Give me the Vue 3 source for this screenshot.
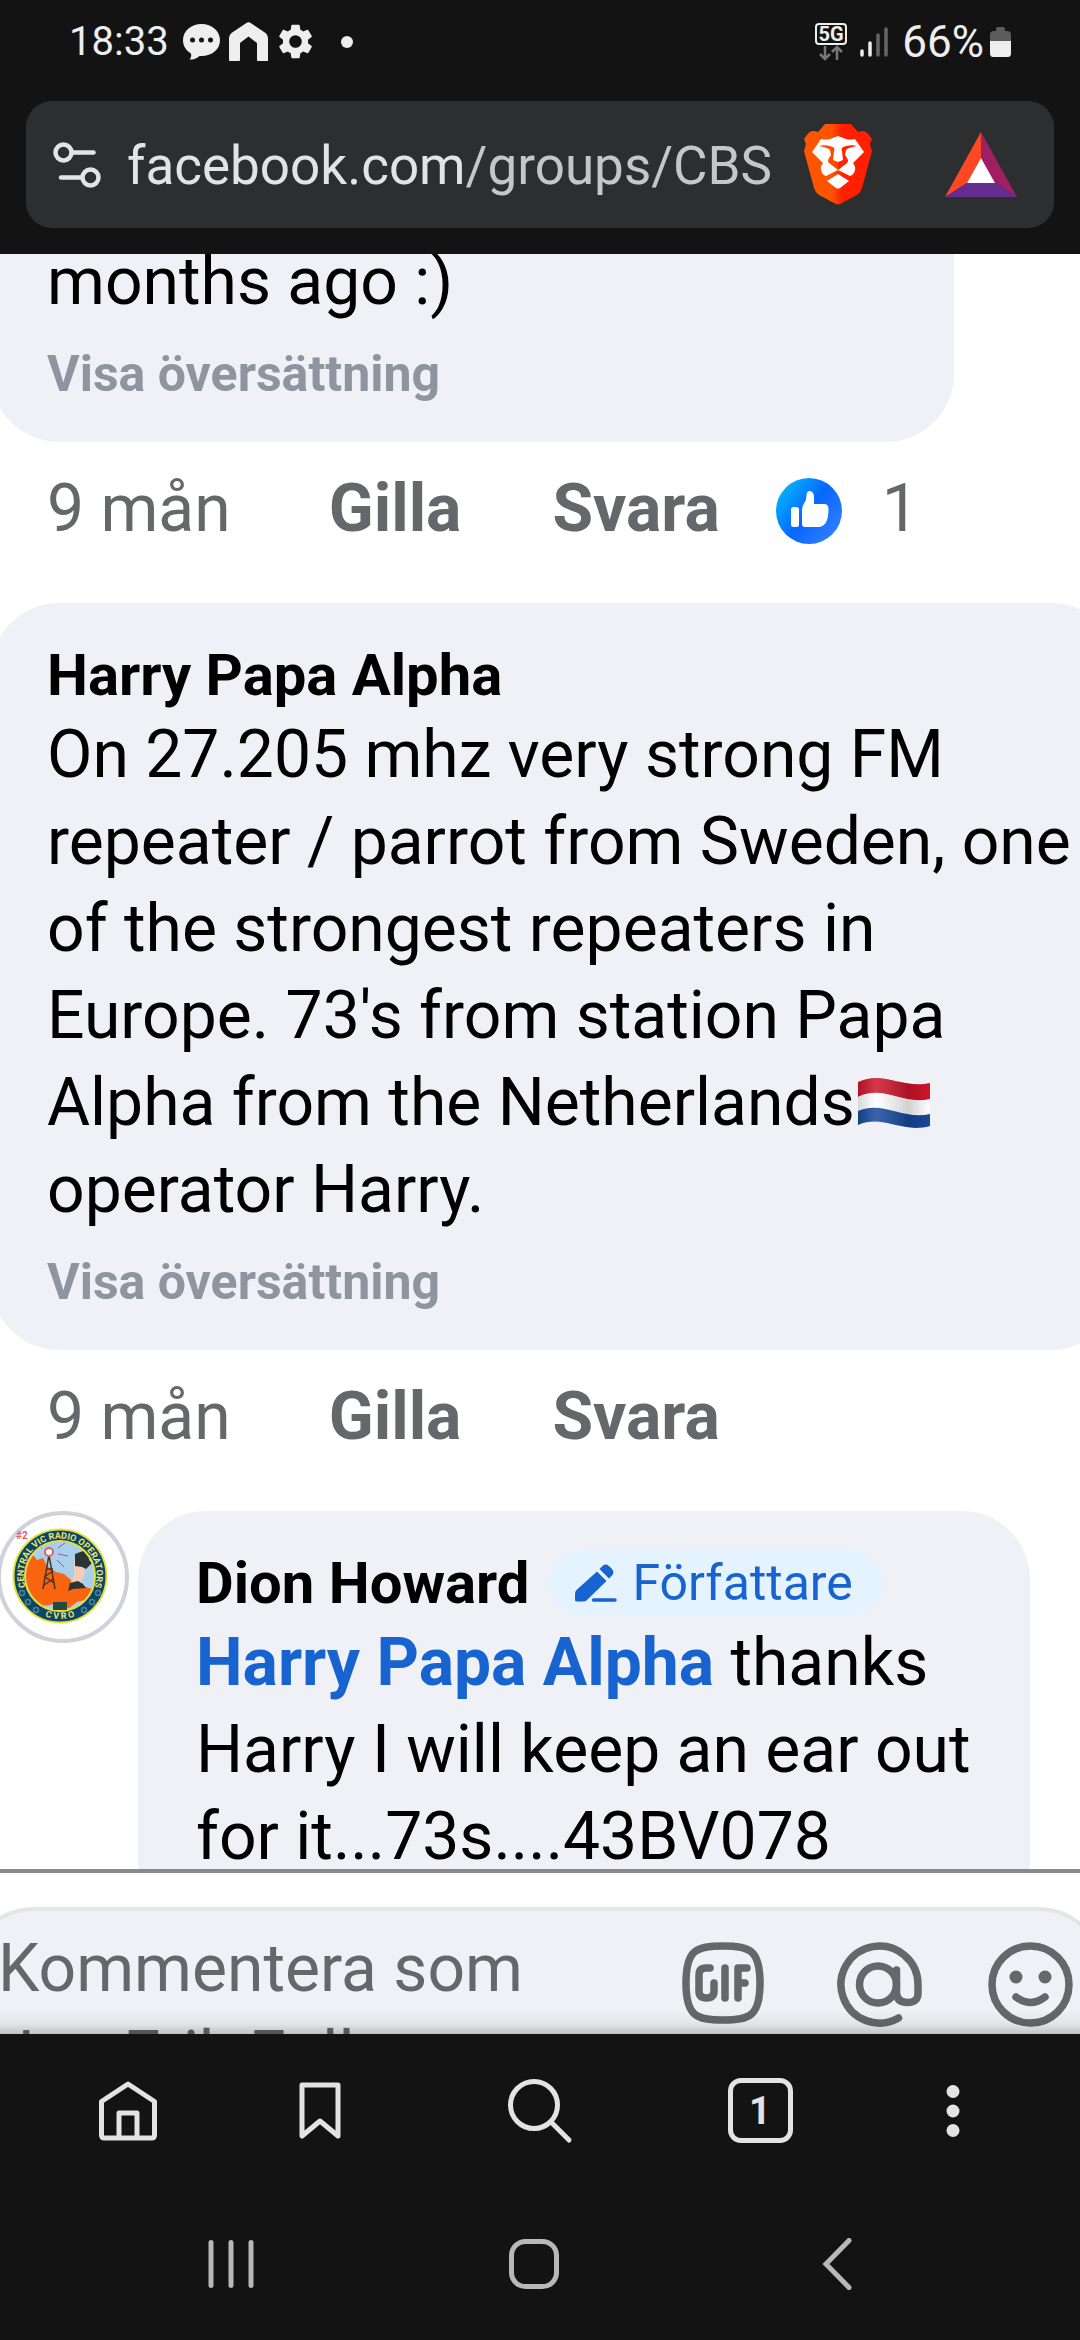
<script setup>
const comments = [
  {
    id: 1,
    variant: 'first',
    text: 'months ago :)',
    likes: 1,
  },
  {
    id: 2,
    variant: 'wide',
    author: 'Harry Papa Alpha',
    text: "On 27.205 mhz very strong FM repeater / parrot from Sweden, one of the strongest repeaters in Europe. 73's from station Papa Alpha from the Netherlands",
    flag: true,
    textAfter: 'operator Harry.',
    likes: 0,
  },
]
</script>

<template>
  <div class="screen">
    <header class="top">
      <div class="status">
        <span class="clock">18:33</span>
        <svg class="s-chat" viewBox="0 0 37 36" width="37" height="36" aria-hidden="true">
          <path d="M18.500 0C29 0 37 7 37 16.300S29 32 18.500 32h-2C13 35 9 36 6.500 35.500 8 34 8.500 32 8 29.500 3 26.500 0 22 0 16.300 0 7 8 0 18.500 0z" fill="#eee" />
          <circle cx="9.500" cy="16" r="2.500" fill="#131313" /><circle cx="18.500" cy="16" r="2.500" fill="#131313" /><circle cx="27.500" cy="16" r="2.500" fill="#131313" />
        </svg>
        <svg class="s-home" viewBox="0 0 39 39" width="39" height="39" aria-hidden="true">
          <path d="M17 1.200q2.500-2 5 0l14.500 9.800q2.500 2 2.500 5V39H29q-1 0-1-1V21l-8.500-6.500L11 21v17q0 1-1 1H1q-1 0-1-1V16q0-3 2.500-5z" fill="#eee" />
        </svg>
        <svg class="s-gear" viewBox="2 2 20 20" width="35" height="35" aria-hidden="true">
          <path fill="#eee" fill-rule="evenodd" d="M19.140 12.940c.04-.3.060-.61.060-.94s-.02-.64-.07-.94l2.030-1.580a.49.49 0 0 0 .12-.61l-1.920-3.320a.49.490 0 0 0-.59-.22l-2.390.96a7 7 0 0 0-1.620-.94L14.400 2.810a.48.480 0 0 0-.48-.41h-3.840a.47.470 0 0 0-.47.410L9.250 5.350a7.300 7.300 0 0 0-1.620.94l-2.390-.96a.48.480 0 0 0-.59.220L2.740 8.870a.47.470 0 0 0 .12.610l2.030 1.580a6 6 0 0 0 0 1.880l-2.030 1.580a.49.490 0 0 0-.12.610l1.920 3.320c.12.220.37.290.59.220l2.390-.96c.5.380 1.030.7 1.620.94l.36 2.540c.05.240.24.410.48.410h3.840c.24 0 .44-.17.470-.41l.36-2.540a7.300 7.300 0 0 0 1.620-.94l2.390.96c.22.080.47 0 .59-.22l1.920-3.320a.47.470 0 0 0-.12-.61zM12 15.600a3.600 3.600 0 1 1 0-7.200 3.600 3.600 0 0 1 0 7.200z" />
        </svg>
        <span class="s-dot"></span>
        <div class="status-right">
          <svg viewBox="0 0 33 38" width="33" height="38" aria-hidden="true">
            <rect x="1" y="1" width="30" height="20" rx="3" fill="none" stroke="#eee" stroke-width="2" />
            <text x="16" y="18" text-anchor="middle" font-family="Roboto, sans-serif" font-weight="700" font-size="20" fill="#eee">5G</text>
            <path d="M10 23v13M5 31l5 5 5-5M22 37V24M17 29l5-5 5 5" fill="none" stroke="#777" stroke-width="2.500" />
          </svg>
          <svg class="s-signal" viewBox="0 0 28 30" width="28" height="30" aria-hidden="true">
            <g stroke-linecap="round" stroke-width="3.500" fill="none">
              <path d="M2 24v4M10 16v12" stroke="#eee" /><path d="M18 8v20M26 2v26" stroke="#666" />
            </g>
          </svg>
          <span class="clock battery-text">66%</span>
          <svg class="s-battery" viewBox="0 0 21 30" width="21" height="30" aria-hidden="true">
            <path d="M6 4V2q0-2 2-2h5q2 0 2 2v2h2q4 0 4 4v6H0V8q0-4 4-4z" fill="#5c5c5c" />
            <path d="M0 14h21v12q0 4-3 4H3q-3 0-3-4z" fill="#eee" />
          </svg>
        </div>
      </div>
      <div class="url-bar">
        <button class="plain site" aria-label="Webbplatsinformation">
          <svg viewBox="0 0 48 46" width="48" height="46">
            <g fill="none" stroke="#e3e3e3" stroke-width="4.500" stroke-linecap="round">
              <circle cx="10.500" cy="10.500" r="8" /><path d="M20 10.500h20.500" />
              <circle cx="37.500" cy="35.500" r="8" /><path d="M8 35.500h20" />
            </g>
          </svg>
        </button>
        <button class="plain url">facebook.com<span>/groups/CBS</span></button>
        <button class="plain brave" aria-label="Brave Shields">
          <svg viewBox="0 0 68 81" width="68" height="81">
            <defs>
              <linearGradient id="brave" x1="0" x2="1" y1="0" y2="0">
                <stop offset="0.400" stop-color="#ff5500" /><stop offset="0.560" stop-color="#ff2000" />
              </linearGradient>
            </defs>
            <path fill="url(#brave)" d="M21 0h26l7 8q7-3 11 3l3 4-2 5 2 7-10 37q-1 4-5 7L36 80q-2 1-4 0L15 71q-4-3-5-7L0 27l2-7-2-5 3-4q4-6 11-3z" />
            <path fill="#fff" d="M17 15q5 1 9 0l8-3 8 3q4 1 9 0l9 13-11 11q3 4 2 7-1 5-5 6l-12-6-12 6q-4-1-5-6-1-3 2-7L8 28z" />
            <path fill="#fff" d="M34 50l11 7-9 7q-2 1-4 0l-9-7z" />
            <path fill="#ff4a00" d="M15 22q7-2 14 1 2 1 1 4l-1 9 5 2v8l-9-7q-2-2 0-5l2-3-1-5q-1-2-11-4z" />
            <path fill="#ff2400" d="M53 22q-7-2-14 1-2 1-1 4l1 9-5 2v8l9-7q2-2 0-5l-2-3 1-5q1-2 11-4z" />
          </svg>
        </button>
        <button class="plain bat" aria-label="Brave Rewards">
          <svg viewBox="0 0 72 65" width="72" height="65">
            <path fill="#ff4724" d="M36 0v26L22 51 0 65z" />
            <path fill="#9e1f63" d="M36 0l36 65-22-14-14-25z" />
            <path fill="#662d91" d="M0 65l22-14h28l22 14z" />
            <path fill="#fff" d="M36 26l14 25H22z" />
          </svg>
        </button>
      </div>
    </header>

    <main class="feed">
      <div class="thread">
        <article v-for="c in comments" :key="c.id">
          <div class="bubble" :class="c.variant">
            <div v-if="c.author" class="name-row"><strong class="author">{{ c.author }}</strong></div>
            <p class="body">{{ c.text }}<svg v-if="c.flag" class="flag" viewBox="0 0 72 52" width="72" height="52" role="img" aria-label="Nederländerna">
              <defs>
                <linearGradient id="fold" x1="0" x2="1" y1="0" y2="0">
                  <stop offset="0" stop-color="#000" stop-opacity="0.150" /><stop offset="0.250" stop-color="#fff" stop-opacity="0.150" />
                  <stop offset="0.700" stop-color="#000" stop-opacity="0.180" /><stop offset="1" stop-color="#000" stop-opacity="0" />
                </linearGradient>
              </defs>
              <path fill="#d0142c" d="M0 5C25-7 44 12 72 6v17C44 28 25 7 0 20z" />
              <path fill="#fff" d="M0 20C25 8 44 28 72 22v16C44 42 25 22 0 35z" />
              <path fill="#164a9c" d="M0 34c25-11 44 9 72 3v12c-28 8-47-12-72-1z" />
              <path fill="url(#fold)" d="M0 5C25-7 44 12 72 6v43C44 57 25 37 0 48z" />
            </svg><template v-if="c.textAfter"> {{ c.textAfter }}</template></p>
            <button class="plain translate">Visa översättning</button>
          </div>
          <div class="actions">
            <span class="age">9 mån</span>
            <button class="plain">Gilla</button>
            <button class="plain">Svara</button>
            <span v-if="c.likes" class="likes">
              <svg viewBox="0 0 66 66" width="66" height="66" aria-hidden="true">
                <defs>
                  <linearGradient id="like" x1="0.100" y1="0.200" x2="0.900" y2="0.800">
                    <stop offset="0" stop-color="#02adfc" /><stop offset="0.500" stop-color="#0866ff" /><stop offset="1" stop-color="#2b7eff" />
                  </linearGradient>
                </defs>
                <circle cx="33" cy="33" r="33" fill="url(#like)" />
                <rect x="15" y="29" width="8" height="20" rx="2.500" fill="#fff" />
                <path fill="#fff" d="M26 32q0-4 2-6.500 2.500-3 2.500-8 0-4.500 3-4.500 4.500 0 4.500 7v6h10q4.500 0 4.500 5 0 18-10.500 18H29q-3 0-3-3z" />
              </svg>
              1
            </span>
          </div>
        </article>

        <article class="reply">
          <svg class="avatar" viewBox="0 0 132 132" width="132" height="132" role="img" aria-label="Dion Howard">
            <defs>
              <path id="arc-top" d="M28.500 76a36.500 36.500 0 1 1 69 0" />
              <path id="arc-bottom" d="M20 65a43 43 0 0 0 86 0" />
              <clipPath id="seal"><circle cx="63" cy="65" r="34" /></clipPath>
            </defs>
            <circle cx="66" cy="66" r="64" fill="#fff" stroke="#ced3d9" stroke-width="4" />
            <text x="19" y="28" font-family="Roboto, sans-serif" font-weight="700" font-size="10" fill="#e0606a">#2</text>
            <circle cx="63" cy="65" r="46.500" fill="#0a4667" stroke="#e9df3c" stroke-width="2" />
            <circle cx="63" cy="65" r="35" fill="#a9cfec" stroke="#e9df3c" stroke-width="2" />
            <g clip-path="url(#seal)">
              <path fill="#f9650f" d="M27 45l10 0 3 4 6-2 4 8 9 6 8 2 6 5 4 7 12 1 12 4-9 8-12 3-8 6-6-1-5-5-8 3-10 1-8-4-8-6z" />
              <path fill="#f1cdb8" d="M77 48l6-4 7 6-3 14-4 12-9 2-1-4 4-10z" />
              <path fill="#2c3434" d="M78 43l8-3 8 4-2 5 3 3-6 6-4-2-7-1zM73 72l8-2 5 3 3 4-13 1-5 2z" />
              <path fill="none" stroke="#4a3428" stroke-width="1.500" d="M52 44l-6 34M52 44l6 34M48 66l9 6M56 60l-9 6M47 74l9-6M49 58h7" />
              <path fill="none" stroke="#8a5fa5" stroke-width="1" d="M61 37l8-6M61 43l10 2M60 49l7 7M45 37l-6-5" />
            </g>
            <circle cx="52" cy="41" r="4" fill="#fff" stroke="#e0605a" stroke-width="2" />
            <rect x="56" y="91" width="14" height="8" fill="#26483d" />
            <g font-family="Roboto, sans-serif" font-weight="700" font-size="9" fill="#efe36a">
              <text><textPath href="#arc-top" startOffset="50%" text-anchor="middle">CENTRAL VIC RADIO OPERATORS</textPath></text>
              <text><textPath href="#arc-bottom" startOffset="50%" text-anchor="middle">C V R O</textPath></text>
            </g>
            <g fill="none" stroke="#4d8399" stroke-width="1.500">
              <circle cx="25" cy="82" r="2.500" /><circle cx="31" cy="91" r="2.500" /><circle cx="39" cy="99" r="2.500" />
              <circle cx="101" cy="82" r="2.500" /><circle cx="95" cy="91" r="2.500" /><circle cx="87" cy="99" r="2.500" />
            </g>
          </svg>
          <div class="bubble nested">
            <div class="name-row">
              <strong class="author">Dion Howard</strong>
              <span class="badge">
                <svg viewBox="0 0 42 40" width="42" height="40" aria-hidden="true">
                  <path fill="#1763cf" d="M22 8.500l9.500 9.500L12 37q-1.500 1.500-4 1.500H1.500Q0 38.500 0 37v-6q0-2.500 1.500-4zM24.500 6l3-3q3.500-3 7 .5l2 2q3.500 3.500.5 7l-3 3z" />
                  <path d="M18.500 37H40" stroke="#1763cf" stroke-width="3.500" stroke-linecap="round" />
                </svg>
                Författare
              </span>
            </div>
            <p class="body"><a href="#" class="mention">Harry Papa Alpha</a> thanks Harry I will keep an ear out for it...73s....43BV078</p>
          </div>
        </article>
      </div>
    </main>

    <section class="composer">
      <div class="field">
        <textarea aria-label="Kommentera" placeholder="Kommentera som Jan Erik Foll" rows="2"></textarea>
        <button class="plain gif" aria-label="GIF">
          <svg viewBox="0 0 82 82" width="82" height="82">
            <g fill="none" stroke="#65676b" stroke-width="7.500" stroke-linecap="round" stroke-linejoin="round">
              <path d="M41 4C68 4 78 8 78 41S68 78 41 78 4 74 4 41 14 4 41 4z" />
              <path d="M28 26h-4q-7 0-7 7v16q0 7 7.500 7t7.500-7v-8M43 26v30M56 56V26h9M56 41h7" />
            </g>
          </svg>
        </button>
        <button class="plain mention-btn" aria-label="Omnämn">
          <svg viewBox="0 0 85 85" width="85" height="85">
            <g fill="none" stroke="#65676b" stroke-width="7.500" stroke-linecap="round">
              <circle cx="41" cy="42.500" r="18.500" />
              <path d="M59.500 28v22q0 10.500 11 10.500T81 50v-7.500A38.500 38.500 0 1 0 61.500 76" />
            </g>
          </svg>
        </button>
        <button class="plain" aria-label="Emoji">
          <svg viewBox="0 0 85 85" width="85" height="85">
            <circle cx="42.500" cy="42.500" r="38.500" fill="none" stroke="#65676b" stroke-width="7.500" />
            <circle cx="28" cy="35" r="6.500" fill="#65676b" /><circle cx="57" cy="35" r="6.500" fill="#65676b" />
            <path d="M28 55q14.500 11 29 0" fill="none" stroke="#65676b" stroke-width="7.500" stroke-linecap="round" />
          </svg>
        </button>
      </div>
      <div class="shade"></div>
    </section>

    <nav class="browser-nav">
      <button class="plain" aria-label="Startsida">
        <svg viewBox="0 0 60 60" width="60" height="60">
          <g fill="none" stroke="#e3e3e3" stroke-width="5" stroke-linejoin="round">
            <path d="M30 3l26.500 17.500V54q0 3-3 3h-47q-3 0-3-3V20.500z" /><path d="M21 57V32h18v25" />
          </g>
        </svg>
      </button>
      <button class="plain" aria-label="Bokmärken">
        <svg viewBox="0 0 42 58" width="42" height="58">
          <path d="M3 3h36v51L21 39 3 54z" fill="none" stroke="#e3e3e3" stroke-width="5" stroke-linejoin="round" />
        </svg>
      </button>
      <button class="plain" aria-label="Sök">
        <svg viewBox="0 0 66 66" width="66" height="66">
          <g fill="none" stroke="#e3e3e3" stroke-width="5" stroke-linecap="round"><circle cx="27" cy="27" r="23.500" /><path d="M44 44l18 18" /></g>
        </svg>
      </button>
      <button class="plain" aria-label="Flikar"><span class="tab-count">1</span></button>
      <button class="plain" aria-label="Meny">
        <svg viewBox="0 0 14 54" width="14" height="54">
          <g fill="#e3e3e3"><circle cx="7" cy="7.500" r="6.500" /><circle cx="7" cy="27" r="6.500" /><circle cx="7" cy="46.500" r="6.500" /></g>
        </svg>
      </button>
    </nav>
    <nav class="system-nav">
      <button class="plain" aria-label="Senaste">
        <svg viewBox="0 0 46 48" width="46" height="48"><path d="M3 2.500v43M23 2.500v43M43 2.500v43" stroke="#b8b8b8" stroke-width="5" stroke-linecap="round" /></svg>
      </button>
      <button class="plain" aria-label="Hem">
        <svg viewBox="0 0 50 50" width="50" height="50"><rect x="2.500" y="2.500" width="45" height="45" rx="14" fill="none" stroke="#b8b8b8" stroke-width="5" /></svg>
      </button>
      <button class="plain" aria-label="Tillbaka">
        <svg viewBox="0 0 30 52" width="30" height="52"><path d="M27 2.500L4 26l23 23.500" fill="none" stroke="#b8b8b8" stroke-width="5" stroke-linecap="round" /></svg>
      </button>
    </nav>
  </div>
</template>

<style>
body {
  margin: 0;
  background: #131313;
}
</style>

<style scoped>
* {
  box-sizing: border-box;
}
.screen {
  display: flex;
  flex-direction: column;
  height: 100vh;
  overflow: hidden;
  font-family: Roboto, sans-serif;
  color: #000;
  background: #fff;
}
svg {
  display: block;
  flex: none;
}
.plain {
  padding: 0;
  border: 0;
  background: none;
  font: inherit;
  color: inherit;
  text-align: left;
}

/* status bar and address bar */
.top {
  flex: none;
  padding: 0 26px 26px;
  background: #131313;
}
.status {
  display: flex;
  align-items: center;
  height: 83px;
  margin-bottom: 18px;
  padding: 0 43px;
}
.clock {
  font-size: 40px;
  line-height: 48px;
  color: #eee;
}
.s-chat {
  margin-left: 14px;
}
.s-home {
  margin-left: 9px;
}
.s-gear {
  margin-left: 10px;
}
.s-dot {
  width: 12px;
  height: 12px;
  margin-left: 28px;
  border-radius: 50%;
  background: #eee;
}
.status-right {
  display: flex;
  align-items: center;
  margin-left: auto;
}
.s-signal {
  margin-left: 12px;
}
.battery-text {
  margin-left: 14px;
  font-size: 44px;
}
.s-battery {
  margin-left: 6px;
}
.url-bar {
  display: flex;
  align-items: center;
  height: 127px;
  padding: 0 37px 0 27px;
  border-radius: 26px;
  background: #2d2e30;
}
.url {
  flex: 1;
  min-width: 0;
  margin-left: 26px;
  padding-top: 2px;
  overflow: hidden;
  white-space: nowrap;
  font-size: 53px;
  line-height: 64px;
  color: #e3e3e3;
}
.url span {
  color: #c4c7c5;
}
.brave {
  margin-left: 34px;
}
.bat {
  margin-left: 73px;
}

/* comments */
.feed {
  flex: 1;
  min-height: 0;
  overflow: hidden;
}
.thread {
  margin-top: -16px;
}
.bubble {
  padding: 36px 39px 38px 56px;
  border-radius: 68px;
  background: #f0f1f6;
}
.first {
  margin: 0 126px 0 -9px;
  padding-top: 0;
  border-top-left-radius: 0;
  border-top-right-radius: 0;
}
.wide {
  margin: 0 -39px 0 -9px;
}
.name-row {
  display: flex;
  align-items: center;
  height: 72px;
}
.author {
  font-size: 58px;
  line-height: 72px;
  font-weight: 700;
}
.body {
  margin: 0;
  font-size: 66px;
  line-height: 87px;
}
.flag {
  display: inline-block;
  margin-left: 3px;
  vertical-align: -4px;
}
.translate {
  display: block;
  margin-top: 19px;
  font-size: 50px;
  line-height: 60px;
  font-weight: 700;
  color: #8f949e;
}
.actions {
  display: flex;
  align-items: center;
  height: 161px;
  padding: 0 47px 27px;
  font-size: 66px;
  line-height: 78px;
  color: #65676b;
}
.actions button {
  margin-left: 98px;
  font-weight: 700;
}
.actions button + button {
  margin-left: 91px;
}
.likes {
  display: flex;
  align-items: center;
  gap: 40px;
  margin-left: 56px;
}
.likes svg {
  margin-top: 4px;
}
.reply {
  display: flex;
  align-items: flex-start;
  gap: 9px;
}
.avatar {
  margin-left: -3px;
}
.nested {
  flex: 1;
  margin-right: 50px;
  padding-left: 58px;
  border-bottom-left-radius: 0;
  border-bottom-right-radius: 0;
}
.badge {
  display: flex;
  align-items: center;
  gap: 15px;
  height: 66px;
  margin-left: 20px;
  padding: 0 30px 0 26px;
  border-radius: 33px;
  background: #e5f2ff;
  font-size: 50px;
  line-height: 60px;
  color: #1763cf;
}
.mention {
  font-weight: 700;
  color: #1763cf;
  text-decoration: none;
}

/* comment box */
.composer {
  position: relative;
  flex: none;
  height: 165px;
  overflow: hidden;
  border-top: 4px solid #868a8f;
}
.field {
  display: flex;
  align-items: flex-start;
  height: 260px;
  margin: 34px -26px 0 -34px;
  padding: 31px 29px 0 28px;
  border: 4px solid #e4e5e5;
  border-radius: 68px;
  background: #f0f1f6;
}
textarea {
  flex: 1;
  min-width: 0;
  height: 176px;
  margin-top: -17px;
  margin-right: 116px;
  padding: 0;
  border: 0;
  overflow: hidden;
  resize: none;
  background: none;
  font: 66px/87px Roboto, sans-serif;
}
textarea::placeholder {
  color: #65676b;
  opacity: 1;
}
.mention-btn {
  margin: 0 66px 0 73px;
}
.shade {
  position: absolute;
  right: 0;
  bottom: 0;
  left: 0;
  height: 24px;
  background: linear-gradient(rgba(0, 0, 0, 0), rgba(0, 0, 0, 0.06) 60%, rgba(0, 0, 0, 0.2));
}

/* bottom bars */
.browser-nav,
.system-nav {
  display: grid;
  flex: none;
  height: 153px;
  background: #131313;
}
.browser-nav {
  grid-template-columns: 3fr 4fr 4fr 4fr 3fr;
  padding: 0 45px;
}
.system-nav {
  grid-template-columns: repeat(3, 1fr);
  padding: 0 92px 0 80px;
}
.browser-nav button,
.system-nav button {
  display: flex;
  align-items: center;
  justify-content: center;
}
.tab-count {
  width: 65px;
  height: 65px;
  border: 5px solid #e3e3e3;
  border-radius: 13px;
  font-size: 38px;
  line-height: 56px;
  font-weight: 700;
  text-align: center;
  color: #e3e3e3;
}
</style>
